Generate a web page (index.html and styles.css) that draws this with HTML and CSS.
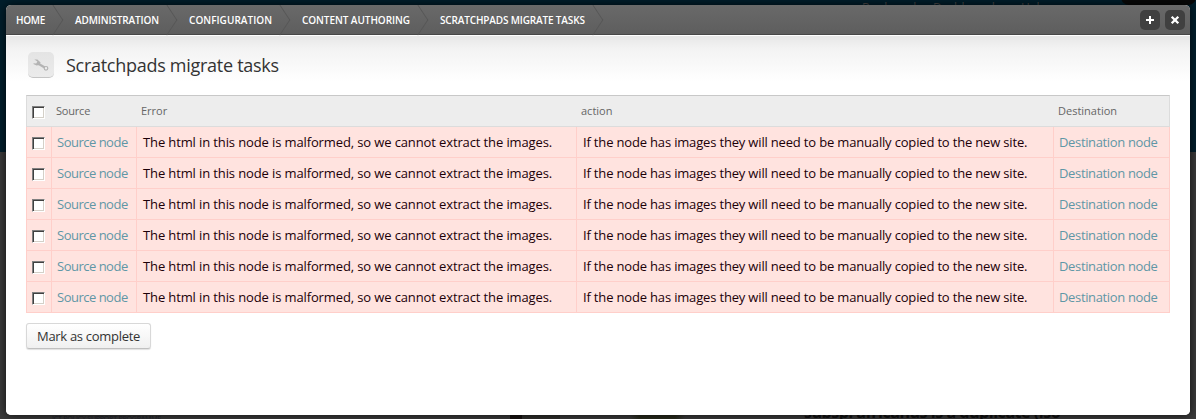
FILE: index.html
```
<!DOCTYPE html>
<html lang="en">
<head>
<meta charset="utf-8">
<title>Scratchpads migrate tasks</title>
<link rel="stylesheet" href="styles.css">
</head>
<body>
<div class="backdrop">
  <div class="backdrop-tab"></div>
  <span class="ghost ghost-nav">Bookmarks</span>
  <span class="ghost ghost-nav ghost-nav-2">Dashboard</span>
  <span class="ghost ghost-nav ghost-nav-3">Help</span>
  <span class="ghost ghost-funding">ICT POLICY SUPPORT PROGRAMME</span>
  <div class="ghost-photo"></div>
  <span class="ghost ghost-heading">subsp. africanus is a duplicate (iso</span>
</div>
<main class="overlay">
  <header class="bar">
    <nav class="crumbs">
      <a class="crumb c1"><span>HOME</span></a>
      <a class="crumb c2"><span>ADMINISTRATION</span></a>
      <a class="crumb c3"><span>CONFIGURATION</span></a>
      <a class="crumb c4"><span>CONTENT AUTHORING</span></a>
      <a class="crumb c5"><span>SCRATCHPADS MIGRATE TASKS</span></a>
    </nav>
    <div class="tools">
      <button class="tool" aria-label="Add"><svg width="20" height="20" viewBox="0 0 20 20"><path d="M10 6v8M6 10h8" stroke="#fff" stroke-width="2"/></svg></button>
      <button class="tool" aria-label="Close"><svg width="20" height="20" viewBox="0 0 20 20"><path d="M6.7 6.7l6.6 6.6M13.3 6.7l-6.6 6.6" stroke="#fff" stroke-width="2.3"/></svg></button>
    </div>
  </header>
  <section class="content">
    <div class="heading">
      <div class="badge"><svg width="16" height="12" viewBox="0 0 16 12"><path d="M4.5 4.2L12.6 9" stroke="#b3b3b3" stroke-width="2.2" fill="none"/><circle cx="13" cy="9.3" r="1.8" fill="#ececec" stroke="#b3b3b3" stroke-width="1.2"/><path d="M1.4.6L4.4.4 7.6 3.4 6.4 6 3.6 6.6.4 5 .6 4.2 3.2 4.4 4.4 2.6Z" fill="#b3b3b3"/></svg></div>
      <h1>Scratchpads migrate tasks</h1>
    </div>
    <div class="table">
      <div class="row head"><div><i class="check"></i></div><div><span class="t-src">Source</span></div><div><span>Error</span></div><div><span>action</span></div><div><span class="t-dst">Destination</span></div></div>
      <div class="row"><div><i class="check"></i></div><div><a class="src">Source node</a></div><div><span class="err">The html in this node is malformed, so we cannot extract the images.</span></div><div><span class="act">If the node has images they will need to be manually copied to the new site.</span></div><div><a class="dst">Destination node</a></div></div>
      <div class="row"><div><i class="check"></i></div><div><a class="src">Source node</a></div><div><span class="err">The html in this node is malformed, so we cannot extract the images.</span></div><div><span class="act">If the node has images they will need to be manually copied to the new site.</span></div><div><a class="dst">Destination node</a></div></div>
      <div class="row"><div><i class="check"></i></div><div><a class="src">Source node</a></div><div><span class="err">The html in this node is malformed, so we cannot extract the images.</span></div><div><span class="act">If the node has images they will need to be manually copied to the new site.</span></div><div><a class="dst">Destination node</a></div></div>
      <div class="row"><div><i class="check"></i></div><div><a class="src">Source node</a></div><div><span class="err">The html in this node is malformed, so we cannot extract the images.</span></div><div><span class="act">If the node has images they will need to be manually copied to the new site.</span></div><div><a class="dst">Destination node</a></div></div>
      <div class="row"><div><i class="check"></i></div><div><a class="src">Source node</a></div><div><span class="err">The html in this node is malformed, so we cannot extract the images.</span></div><div><span class="act">If the node has images they will need to be manually copied to the new site.</span></div><div><a class="dst">Destination node</a></div></div>
      <div class="row"><div><i class="check"></i></div><div><a class="src">Source node</a></div><div><span class="err">The html in this node is malformed, so we cannot extract the images.</span></div><div><span class="act">If the node has images they will need to be manually copied to the new site.</span></div><div><a class="dst">Destination node</a></div></div>
    </div>
    <button class="submit">Mark as complete</button>
  </section>
</main>
</body>
</html>
```
FILE: styles.css
```
* { box-sizing: border-box; }
body {
  margin: 0;
  height: 419px;
  padding: 5px 6px 4px;
  overflow: hidden;
  font-family: "Trebuchet MS", "Open Sans", "Noto Sans", sans-serif;
  font-size: 13px;
}
.backdrop {
  position: absolute;
  inset: 0;
  overflow: hidden;
  background: linear-gradient(#001e2b 0 152px, #3a3a3a 152px);
}
.backdrop-tab {
  position: absolute;
  left: 1121px;
  top: -10px;
  width: 75px;
  height: 15px;
  border-radius: 0 0 8px 8px;
  background: #080808;
}
.ghost { position: absolute; white-space: nowrap; }
.ghost-nav { left: 862px; top: 0; font-size: 12px; line-height: 16px; color: #4a4848; }
.ghost-nav-2 { left: 933px; }
.ghost-nav-3 { left: 1021px; }
.ghost-funding { left: 52px; top: 414px; font-size: 7px; line-height: 10px; color: #20222c; letter-spacing: -0.2px; }
.ghost-heading { left: 804px; top: 402px; font-size: 16px; line-height: 20px; font-weight: bold; color: #111; letter-spacing: -0.45px; }
.ghost-photo { position: absolute; left: 510px; top: 411px; width: 176px; height: 8px; background: linear-gradient(90deg, #171110 0 12px, #302f2c 12px 50px, #3a3a3a 50px 120px, #282b1c 130px 165px, #3a3a3a 175px); }
.overlay {
  position: relative;
  height: 410px;
  border-radius: 5px;
  overflow: hidden;
  background: #fff;
  box-shadow: 0 0 8px rgba(0, 0, 0, .75);
}
.bar {
  height: 30px;
  display: flex;
  justify-content: space-between;
  background: linear-gradient(#696969, #5e5e5e);
  border-bottom: 1px solid #484848;
}
.crumbs { display: flex; }
.crumb {
  position: relative;
  padding-left: 14px;
  line-height: 30px;
  font-size: 10px;
  font-weight: 600;
  color: #fff;
  white-space: nowrap;
}
.crumb::after {
  content: "";
  position: absolute;
  right: -3px;
  top: 4px;
  width: 21px;
  height: 21px;
  border: solid #565656;
  border-width: 1px 1px 0 0;
  transform: scaleX(.66) rotate(45deg);
}
.c1 { width: 55px; padding-left: 10px; }
.c2 { width: 114px; }
.c3 { width: 113px; }
.c4 { width: 138px; }
.c5 { width: 175px; }
.c1 span { letter-spacing: -0.3px; }
.c2 span { letter-spacing: -0.12px; }
.c3 span { letter-spacing: 0.04px; }
.c4 span { letter-spacing: -0.06px; }
.c5 span { letter-spacing: -0.15px; }
.tools { display: flex; gap: 5px; padding: 5px 5px 0 0; }
.tool { display: block; width: 20px; height: 20px; padding: 0; border: 0; border-radius: 5px; background: #404040; }
.tool svg { display: block; }
.content {
  height: 380px;
  padding: 17px 20px 0;
  background: linear-gradient(#fff 0 1px, #e7e7e7 1px, #f3f3f3 14px, #fff 47px);
}
.heading { display: flex; height: 43px; padding-left: 2px; }
.badge {
  width: 26px;
  height: 26px;
  display: flex;
  align-items: center;
  justify-content: center;
  border-radius: 5px;
  background: linear-gradient(#e4e4e4, #ebebeb);
  border-bottom: 1px solid #c4c4c4;
}
h1 { margin: 0 0 0 12px; font-size: 18px; line-height: 26px; font-weight: 400; letter-spacing: -0.28px; color: #333; white-space: nowrap; }
.table { width: 1144px; border-right: 1px solid #ffcfca; }
.row {
  display: grid;
  grid-template-columns: 25px 85px 440px 477px 116px;
  height: 31px;
  color: #1c0008;
  background: #ffe3df;
  border-bottom: 1px solid #ffcfca;
}
.row > div { display: flex; align-items: center; padding: 0 0 1px 5px; border-left: 1px solid #ffcfca; }
.row > div:nth-child(n+3) { padding-left: 6px; }
.row > div:nth-child(5) { padding-left: 5px; }
.row.head {
  width: 1144px;
  height: 32px;
  color: #666;
  font-size: 11px;
  background: #ededed;
  border: 1px solid #dcdcdc;
  border-top-color: #c8c8c8;
}
.row.head > div:first-child { border: 0; padding-left: 5px; }
.row.head > div:nth-child(n+2) { border: 0; padding-left: 4px; }
.row span, .row a { white-space: nowrap; line-height: 18px; }
.row a { color: #5f97a6; }
.src { letter-spacing: -0.5px; }
.err { letter-spacing: -0.12px; }
.act { letter-spacing: -0.17px; }
.dst { letter-spacing: -0.35px; }
.t-src { letter-spacing: -0.2px; }
.check {
  width: 13px;
  height: 13px;
  margin-top: 3px;
  background: #fff;
  border: 1px solid;
  border-color: #808080 #fff #fff #808080;
  box-shadow: inset 1px 1px #404040, inset -1px -1px #d4d0c8;
}
.submit {
  display: block;
  width: 125px;
  height: 26px;
  margin-top: 10px;
  padding: 0;
  font: inherit;
  letter-spacing: -0.3px;
  color: #333;
  white-space: nowrap;
  background: linear-gradient(#fff, #f0f0f0);
  border: 1px solid #d8d8d8;
  border-bottom-color: #c0c0c0;
  border-radius: 3px;
  box-shadow: 0 1px 1px rgba(0, 0, 0, .12);
}
```
